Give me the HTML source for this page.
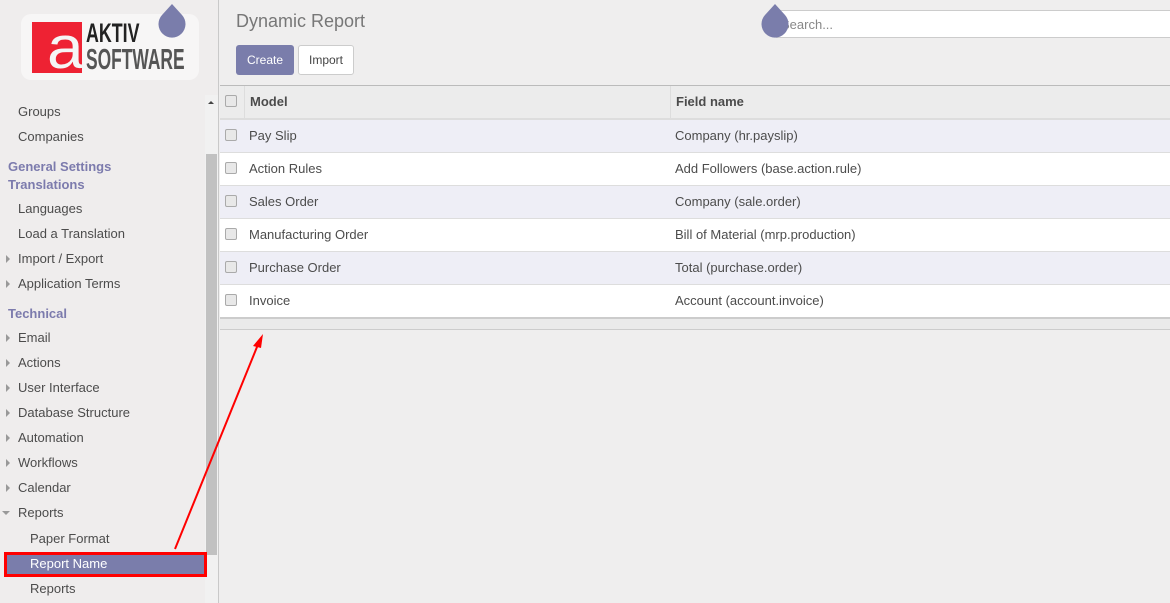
<!DOCTYPE html><html><head><style>
*{margin:0;padding:0;box-sizing:border-box}
body{width:1170px;height:603px;overflow:hidden;background:#efeeee;font-family:"Liberation Sans",sans-serif;font-size:13px;color:#4c4c4c;position:relative}
.a{position:absolute}
.side{left:0;top:0;width:219px;height:603px;border-right:1px solid #c9c9c9;background:#efeded}
.it{position:absolute;left:18px;white-space:nowrap}
.sub{left:30px}
.hd{left:8px;font-weight:bold;color:#7c7bad}
.tri{position:absolute;left:6px;width:0;height:0;border-left:4px solid #999;border-top:4px solid transparent;border-bottom:4px solid transparent}
.cb{position:absolute;left:225px;width:12px;height:12px;border:1px solid #aaa;border-radius:2px;background:#e8e8e8}
.row{position:absolute;left:220px;width:950px;height:33px;border-bottom:1px solid #ddd}
.row span{position:absolute;top:8px}
</style></head><body>
<div class="a side"></div>
<div class="a" style="left:21px;top:14px;width:178px;height:66px;background:#f7f6f6;border-radius:10px"></div>
<div class="a" style="left:32px;top:22px;width:50px;height:51px;background:#ee2233"></div>
<div class="a" style="left:47px;top:18px;font-size:60px;color:#f5f5f5;line-height:60px;transform:scaleX(1.1);transform-origin:left">a</div>
<div class="a" style="left:86px;top:19px;font-size:27px;font-weight:bold;color:#222;line-height:28px;transform:scaleX(.66);transform-origin:left">AKTIV</div>
<div class="a" style="left:86px;top:45px;font-size:29px;font-weight:bold;color:#555;line-height:30px;transform:scaleX(.6);transform-origin:left">SOFTWARE</div>
<svg class="a" style="left:157px;top:3px" width="30" height="36"><path d="M15 1 L25 12 A13.5 13.5 0 1 1 5 12 Z" fill="#7a7dab"/></svg>
<div class="a" style="left:205px;top:95px;width:13px;height:508px;background:#f1f1f1"></div>
<div class="a" style="left:206px;top:154px;width:11px;height:401px;background:#c1c1c1"></div>
<div class="a" style="left:208px;top:101px;border-left:3px solid transparent;border-right:3px solid transparent;border-bottom:3px solid #444"></div>
<div class="it" style="top:104px">Groups</div>
<div class="it" style="top:129px">Companies</div>
<div class="it hd" style="top:159px">General Settings</div>
<div class="it hd" style="top:177px">Translations</div>
<div class="it" style="top:201px">Languages</div>
<div class="it" style="top:226px">Load a Translation</div>
<div class="tri" style="top:255px"></div><div class="it" style="top:251px">Import / Export</div>
<div class="tri" style="top:280px"></div><div class="it" style="top:276px">Application Terms</div>
<div class="it hd" style="top:306px">Technical</div>
<div class="tri" style="top:334px"></div><div class="it" style="top:330px">Email</div>
<div class="tri" style="top:359px"></div><div class="it" style="top:355px">Actions</div>
<div class="tri" style="top:384px"></div><div class="it" style="top:380px">User Interface</div>
<div class="tri" style="top:409px"></div><div class="it" style="top:405px">Database Structure</div>
<div class="tri" style="top:434px"></div><div class="it" style="top:430px">Automation</div>
<div class="tri" style="top:459px"></div><div class="it" style="top:455px">Workflows</div>
<div class="tri" style="top:484px"></div><div class="it" style="top:480px">Calendar</div>
<div class="a" style="left:2px;top:511px;border-top:4px solid #999;border-left:4px solid transparent;border-right:4px solid transparent"></div><div class="it" style="top:505px">Reports</div>
<div class="it sub" style="top:531px">Paper Format</div>
<div class="a" style="left:4px;top:552px;width:203px;height:25px;background:#7a7dab;border:3px solid #f00"></div>
<div class="it sub" style="top:556px;color:#fff">Report Name</div>
<div class="it sub" style="top:581px">Reports</div>
<div class="a" style="left:236px;top:11px;font-size:18px;color:#777">Dynamic Report</div>
<div class="a" style="left:236px;top:45px;width:58px;height:30px;background:#7a7dab;border-radius:3px;color:#fff;font-size:12px;text-align:center;line-height:30px">Create</div>
<div class="a" style="left:298px;top:45px;width:56px;height:30px;background:#fff;border:1px solid #ccc;border-radius:3px;font-size:12px;text-align:center;line-height:28px;color:#444">Import</div>
<div class="a" style="left:776px;top:10px;width:394px;height:28px;background:#fff;border:1px solid #ccc;border-right:none;color:#888;padding:6px 4px">Search...</div>
<svg class="a" style="left:760px;top:3px" width="30" height="36"><path d="M15 1 L25 12 A13.5 13.5 0 1 1 5 12 Z" fill="#7a7dab"/></svg>
<div class="a" style="left:220px;top:85px;width:950px;height:35px;background:#ececec;border-top:1px solid #bbb;border-bottom:2px solid #ddd"></div>
<div class="a" style="left:244px;top:86px;width:1px;height:33px;background:#ddd"></div>
<div class="a" style="left:670px;top:86px;width:1px;height:33px;background:#ddd"></div>
<div class="cb" style="top:95px"></div>
<div class="a" style="left:250px;top:94px;font-weight:bold;color:#4c4c4c">Model</div>
<div class="a" style="left:676px;top:94px;font-weight:bold;color:#4c4c4c">Field name</div>
<div class="row" style="top:120px;background:#eeeef6"><span style="left:29px">Pay Slip</span><span style="left:455px">Company (hr.payslip)</span></div>
<div class="row" style="top:153px;background:#fff"><span style="left:29px">Action Rules</span><span style="left:455px">Add Followers (base.action.rule)</span></div>
<div class="row" style="top:186px;background:#eeeef6"><span style="left:29px">Sales Order</span><span style="left:455px">Company (sale.order)</span></div>
<div class="row" style="top:219px;background:#fff"><span style="left:29px">Manufacturing Order</span><span style="left:455px">Bill of Material (mrp.production)</span></div>
<div class="row" style="top:252px;background:#eeeef6"><span style="left:29px">Purchase Order</span><span style="left:455px">Total (purchase.order)</span></div>
<div class="row" style="top:285px;background:#fff;border-bottom:2px solid #ccc;height:34px"><span style="left:29px">Invoice</span><span style="left:455px">Account (account.invoice)</span></div>
<div class="cb" style="top:129px"></div><div class="cb" style="top:162px"></div><div class="cb" style="top:195px"></div><div class="cb" style="top:228px"></div><div class="cb" style="top:261px"></div><div class="cb" style="top:294px"></div>
<div class="a" style="left:220px;top:319px;width:950px;height:11px;background:#eaeaea;border-bottom:1px solid #ccc"></div>
<svg class="a" style="left:0;top:0" width="1170" height="603"><line x1="175" y1="549" x2="259" y2="342" stroke="#f00" stroke-width="2"/><path d="M263 334 L253 346 L261 348 Z" fill="#f00"/></svg>
</body></html>
